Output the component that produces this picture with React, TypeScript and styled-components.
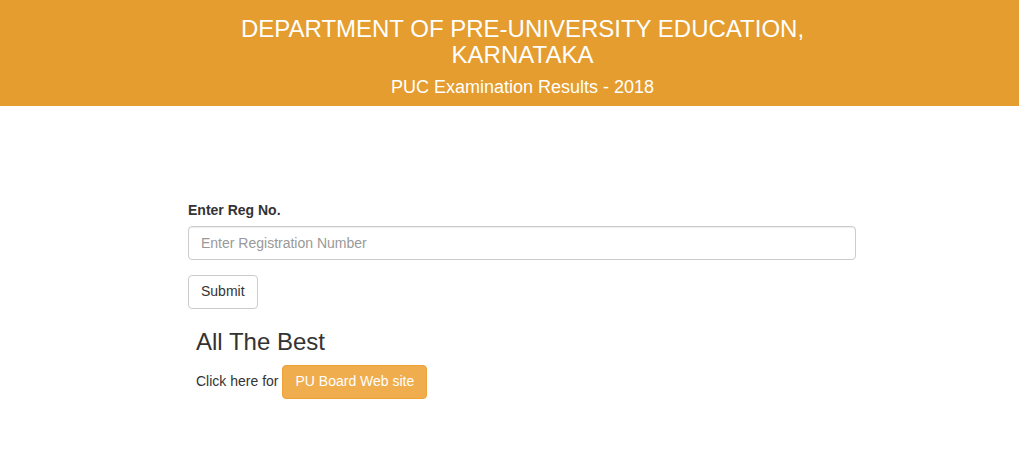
import React from "react";
import styled, { createGlobalStyle } from "styled-components";

const Global = createGlobalStyle`
  html, body { margin: 0; padding: 0; background: #fff; }
  body {
    font-family: "Liberation Sans", Arial, Helvetica, sans-serif;
    font-size: 14px;
    line-height: 1.428571;
    color: #333;
  }
  * { box-sizing: border-box; }
`;

const Header = styled.header`
  background: #e49d2e;
  color: #fff;
  text-align: center;
  padding: 16px 0 10px 26px;
  height: 106px;
`;

const Title = styled.h1`
  margin: 0 auto;
  width: 600px;
  font-size: 24px;
  font-weight: 400;
  line-height: 1.1;
`;

const Subtitle = styled.h2`
  margin: 9px 0 0;
  font-size: 18px;
  font-weight: 400;
  line-height: 1.1;
`;

const Main = styled.main`
  width: 668px;
  margin-left: 188px;
  padding-top: 95px;
`;

const Label = styled.label`
  display: block;
  font-weight: 700;
  margin-bottom: 5px;
`;

const Input = styled.input`
  display: block;
  width: 100%;
  height: 34px;
  padding: 6px 12px;
  font-family: inherit;
  font-size: 14px;
  color: #555;
  border: 1px solid #ccc;
  border-radius: 4px;
  box-shadow: inset 0 1px 1px rgba(0, 0, 0, 0.075);
  &::placeholder { color: #999; }
`;

const Button = styled.button<{ $warning?: boolean }>`
  display: inline-block;
  height: 34px;
  padding: 6px 12px;
  font-family: inherit;
  font-size: 14px;
  line-height: 1.428571;
  border-radius: 4px;
  border: 1px solid ${(p) => (p.$warning ? "#eea236" : "#ccc")};
  background: ${(p) => (p.$warning ? "#f0ad4e" : "#fff")};
  color: ${(p) => (p.$warning ? "#fff" : "#333")};
  cursor: pointer;
`;

const SubmitRow = styled.div`
  margin-top: 15px;
`;

const Extra = styled.div`
  padding-left: 8px;
`;

const Best = styled.h3`
  margin: 20px 0 10px;
  font-size: 24px;
  font-weight: 400;
  line-height: 1.1;
`;

const Line = styled.div`
  display: flex;
  align-items: baseline;
  gap: 4px;
`;

export default function App() {
  return (
    <>
      <Global />
      <Header>
        <Title>DEPARTMENT OF PRE-UNIVERSITY EDUCATION, KARNATAKA</Title>
        <Subtitle>PUC Examination Results - 2018</Subtitle>
      </Header>
      <Main>
        <Label htmlFor="reg">Enter Reg No.</Label>
        <Input id="reg" placeholder="Enter Registration Number" />
        <SubmitRow>
          <Button>Submit</Button>
        </SubmitRow>
        <Extra>
          <Best>All The Best</Best>
          <Line>
            <span>Click here for</span>
            <Button $warning>PU Board Web site</Button>
          </Line>
        </Extra>
      </Main>
    </>
  );
}
